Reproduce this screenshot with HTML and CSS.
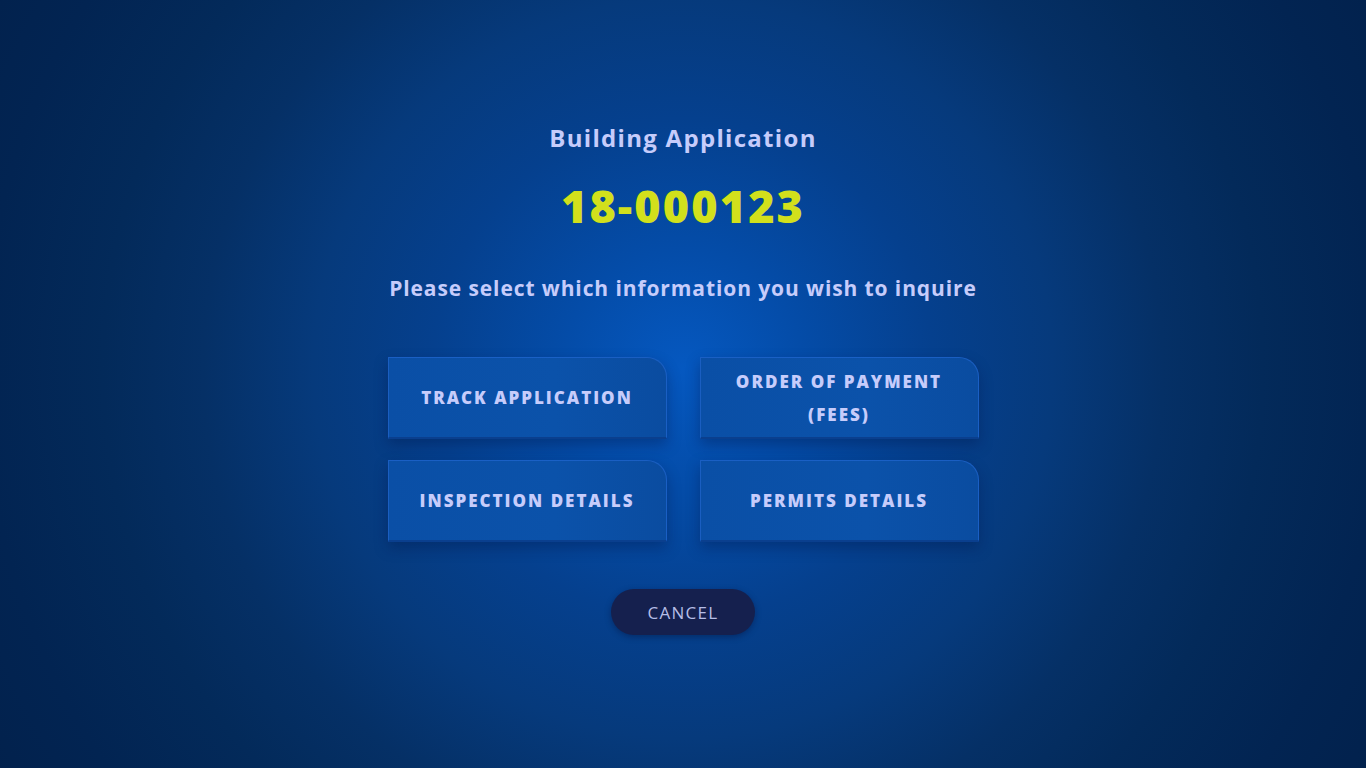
FILE: index.html
```html
<!DOCTYPE html>
<html lang="en">
<head>
<meta charset="utf-8">
<title>Building Application</title>
<link rel="stylesheet" href="styles.css">
</head>
<body>
<main class="screen">
  <h1 class="title">Building Application</h1>
  <div class="app-no">18-000123</div>
  <p class="prompt">Please select which information you wish to inquire</p>
  <div class="options">
    <button class="opt">TRACK APPLICATION</button>
    <button class="opt">ORDER OF PAYMENT<br>(FEES)</button>
    <button class="opt">INSPECTION DETAILS</button>
    <button class="opt">PERMITS DETAILS</button>
  </div>
  <button class="cancel">CANCEL</button>
</main>
</body>
</html>
```
FILE: styles.css
```css
* { box-sizing: border-box; }
html, body { margin: 0; height: 100%; }
body {
  font-family: "Open Sans", "Lato", sans-serif;
  background: radial-gradient(circle at 50% 48%, #0558c0 0px, #044ca8 120px, #05408e 250px, #063a7c 370px, #053066 480px, #032a5a 580px, #022452 700px, #02204a 850px);
  color: #c9d0ff;
  overflow: hidden;
}
.screen {
  height: 768px;
  display: flex;
  flex-direction: column;
  align-items: center;
  padding-top: 122px;
}
.title {
  margin: 0;
  font-size: 24px;
  font-weight: 700;
  line-height: 32px;
  color: #c6ccfb;
  letter-spacing: 1.3px;
}
.app-no {
  margin-top: 24px;
  font-size: 45px;
  font-weight: 800;
  line-height: 56px;
  color: #d2e01c;
  letter-spacing: 2.1px;
}
.prompt {
  margin: 39px 0 0;
  font-size: 21px;
  font-weight: 700;
  line-height: 30px;
  color: #c6ccfb;
  letter-spacing: 0.9px;
}
.options {
  margin-top: 54px;
  display: grid;
  grid-template-columns: 279px 279px;
  column-gap: 33px;
  row-gap: 21px;
}
.opt {
  height: 82px;
  border: 1px solid rgba(40, 110, 220, 0.55);
  border-bottom: 2px solid #0a3f8e;
  border-radius: 0 20px 0 0;
  background: linear-gradient(90deg, #0a4fa6 0%, #0b52aa 60%, #0a4ca0 100%);
  box-shadow: 0 6px 14px rgba(0, 20, 70, 0.35);
  color: #c6ccfb;
  font-family: inherit;
  font-size: 17px;
  font-weight: 800;
  letter-spacing: 2px;
  line-height: 33px;
  padding: 0 10px;
}
.cancel {
  margin-top: 47px;
  width: 144px;
  height: 46px;
  border: none;
  border-radius: 23px;
  background: #15204e;
  box-shadow: 0 2px 6px rgba(0, 10, 40, 0.35);
  color: #b5bde6;
  font-family: inherit;
  font-size: 17px;
  font-weight: 400;
  letter-spacing: 1.3px;
}
```
